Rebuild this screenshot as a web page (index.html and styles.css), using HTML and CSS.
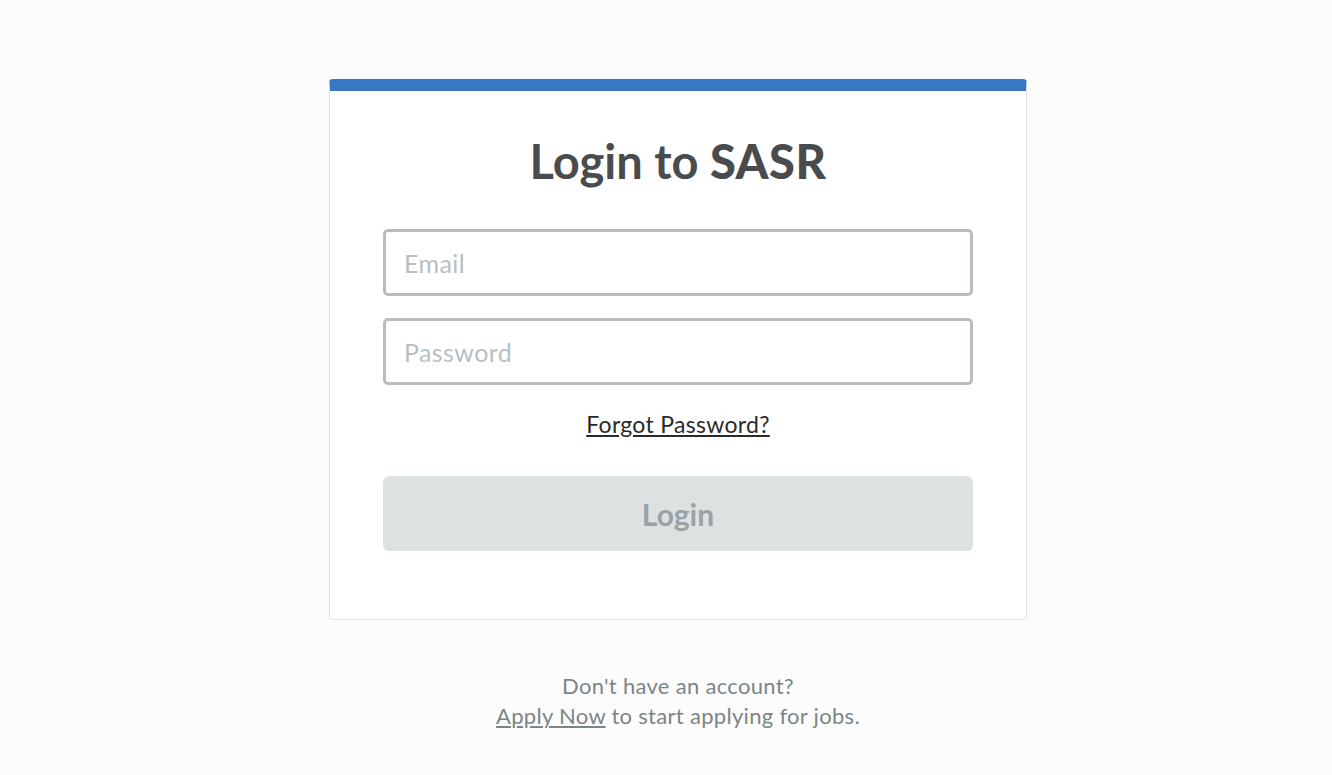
FILE: index.html
```html
<!DOCTYPE html>
<html lang="en">

<head>
    <meta charset="UTF-8">
    <meta name="viewport" content="width=device-width, initial-scale=1.0">
    <title>SASR - Login</title>
    <link rel="stylesheet" href="styles.css">
</head>

<body>

    <main class="page">
        <div class="login-card">
            <h1 class="login-title">Login to <strong>SASR</strong></h1>

            <form class="login-form">
                <input class="field" type="email" placeholder="Email">
                <input class="field" type="password" placeholder="Password">
                <a class="forgot-link" href="#">Forgot Password?</a>
                <button class="login-btn" type="submit" disabled>Login</button>
            </form>
        </div>

        <!-- sign up hint under the card -->
        <p class="signup-note">
            Don't have an account?<br>
            <a href="#">Apply Now</a> to start applying for jobs.
        </p>
    </main>

</body>

</html>
```

FILE: styles.css
```css
body {
    font-family: Lato, "Open Sans", sans-serif;
    margin: 0;
    padding: 0;
    background-color: #fcfcfc;
}

.page {
    display: flex;
    flex-direction: column;
    align-items: center;
    padding-top: 79px;
    padding-left: 24px;
}

.login-card {
    width: 698px;
    box-sizing: border-box;
    background-color: #fff;
    border: 1px solid #dfe2e3;
    border-top: 12px solid #3878c3;
    border-radius: 4px;
    padding: 0 53px 68px;
}

.login-title {
    margin: 42px 0 40px;
    text-align: center;
    font-size: 47px;
    font-weight: 700;
    color: #4a4b4d;
}

.login-title strong {
    font-weight: 900;
    letter-spacing: 0.5px;
}

.login-form {
    display: flex;
    flex-direction: column;
    align-items: center;
}

.field {
    width: 100%;
    height: 67px;
    box-sizing: border-box;
    border: 3px solid #b7bdbd;
    border-radius: 5px;
    padding: 0 18px;
    margin-bottom: 22px;
    font-family: Lato, sans-serif;
    font-size: 25px;
    letter-spacing: 0.4px;
    color: #333;
    background: #fff;
}

.field::placeholder {
    color: #b6bfc3;
}

.forgot-link {
    font-size: 23px;
    letter-spacing: 0.3px;
    color: #2a2a2a;
    text-decoration: underline;
    margin-top: 2px;
    line-height: 30px;
}

.login-btn {
    width: 100%;
    height: 75px;
    margin-top: 37px;
    border: none;
    border-radius: 6px;
    background-color: #dee1e2;
    color: #9aa1a7;
    font-family: Lato, sans-serif;
    font-size: 30px;
    font-weight: 700;
}

.signup-note {
    margin: 51px 0 0;
    text-align: center;
    font-size: 22px;
    letter-spacing: 0.3px;
    line-height: 30px;
    color: #7c8586;
}

.signup-note a {
    color: #7c8586;
    text-decoration: underline;
}
```
